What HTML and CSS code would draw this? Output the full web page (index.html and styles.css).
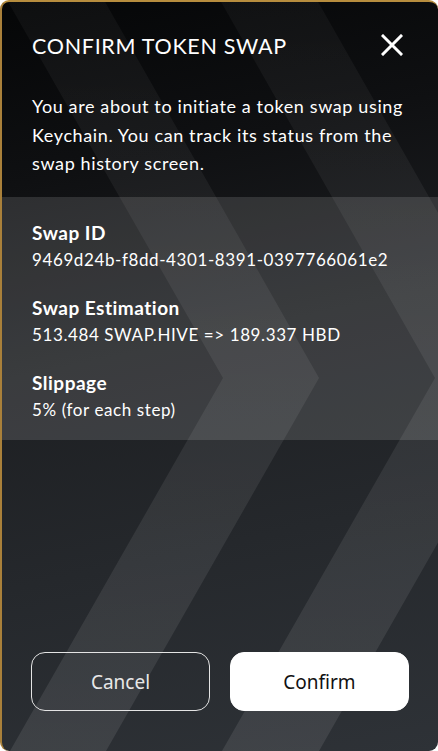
FILE: index.html
```html
<!DOCTYPE html>
<html lang="en">
<head>
<meta charset="utf-8">
<title>Confirm Token Swap</title>
<link rel="stylesheet" href="styles.css">
</head>
<body>
<div class="window">
  <svg class="bg-art" width="438" height="751" viewBox="0 0 438 751" aria-hidden="true">
    <defs>
      <linearGradient id="fade" x1="0" y1="0" x2="0" y2="1">
        <stop offset="0" stop-color="#ffffff" stop-opacity="0.035"/>
        <stop offset="0.5" stop-color="#ffffff" stop-opacity="0.07"/>
        <stop offset="1" stop-color="#ffffff" stop-opacity="0.09"/>
      </linearGradient>
    </defs>
    <polygon points="7,0 104,0 319,378 106,751 10,751 223,378" fill="url(#fade)"/>
    <polygon points="220,0 317,0 532,378 319,751 222,751 435,378" fill="url(#fade)"/>
  </svg>
  <div class="content">
    <div class="header">
      <h1 class="title">CONFIRM TOKEN SWAP</h1>
      <button class="close" aria-label="Close">
        <svg width="22" height="22" viewBox="0 0 22 22"><path d="M2 2 L20 20 M20 2 L2 20" stroke="#fff" stroke-width="3" stroke-linecap="square"/></svg>
      </button>
    </div>
    <p class="desc">You are about to initiate a token swap using Keychain. You can track its status from the swap history screen.</p>
    <div class="panel">
      <div class="item">
        <div class="label">Swap ID</div>
        <div class="value">9469d24b-f8dd-4301-8391-0397766061e2</div>
      </div>
      <div class="item">
        <div class="label">Swap Estimation</div>
        <div class="value">513.484 SWAP.HIVE =&gt; 189.337 HBD</div>
      </div>
      <div class="item">
        <div class="label">Slippage</div>
        <div class="value">5% (for each step)</div>
      </div>
    </div>
    <div class="spacer"></div>
    <div class="actions">
      <button class="btn btn-cancel">Cancel</button>
      <button class="btn btn-confirm">Confirm</button>
    </div>
  </div>
</div>
</body>
</html>
```
FILE: styles.css
```css
* { box-sizing: border-box; }
html, body { margin: 0; padding: 0; background: #ffffff; }
body { width: 438px; height: 751px; overflow: hidden; font-family: Lato, "Liberation Sans", sans-serif; }

.window {
  position: relative;
  width: 438px;
  height: 751px;
  border-radius: 9px;
  border-top: 2px solid #b78d3e;
  border-left: 2px solid #a9803a;
  overflow: hidden;
  background: linear-gradient(168deg, #050607 0%, #0f1012 22%, #1d1f22 45%, #25282c 70%, #2e3237 100%);
}
.bg-art { position: absolute; left: -2px; top: -2px; z-index: 0; }

.content {
  position: relative;
  z-index: 1;
  height: 100%;
  display: flex;
  flex-direction: column;
  color: #fff;
}

.header {
  display: flex;
  justify-content: space-between;
  align-items: center;
  padding: 29px 35px 0 30px;
}
.title {
  margin: 0;
  font-size: 21.5px;
  font-weight: 400;
  letter-spacing: 0.7px;
  line-height: 30px;
}
.close {
  background: none;
  border: 0;
  padding: 0;
  width: 22px;
  height: 22px;
  display: flex;
  margin-top: -3px;
}

.desc {
  margin: 31px 0 0 0;
  padding: 0 30px;
  font-size: 18px;
  letter-spacing: 0.62px;
  line-height: 28.5px;
}

.panel {
  margin-top: 19px;
  background: rgba(255, 255, 255, 0.13);
  padding: 23px 30px 17px;
  display: flex;
  flex-direction: column;
  gap: 22px;
}
.item { display: flex; flex-direction: column; gap: 1px; }
.label { font-size: 19px; font-weight: 700; letter-spacing: 0.5px; line-height: 26px; }
.value { font-size: 17px; letter-spacing: 0.6px; line-height: 26px; }

.spacer { flex: 1; }

.actions {
  display: flex;
  gap: 20px;
  padding: 0 29px 40px 29px;
}
.btn {
  flex: 1;
  height: 59px;
  border-radius: 14px;
  font-family: "Noto Sans", "Open Sans", sans-serif;
  font-size: 19px;
}
.btn-cancel {
  background: transparent;
  border: 1px solid #e4e4e4;
  color: #e8e8e8;
}
.btn-confirm {
  background: #ffffff;
  border: 1px solid #ffffff;
  color: #111;
}
```
